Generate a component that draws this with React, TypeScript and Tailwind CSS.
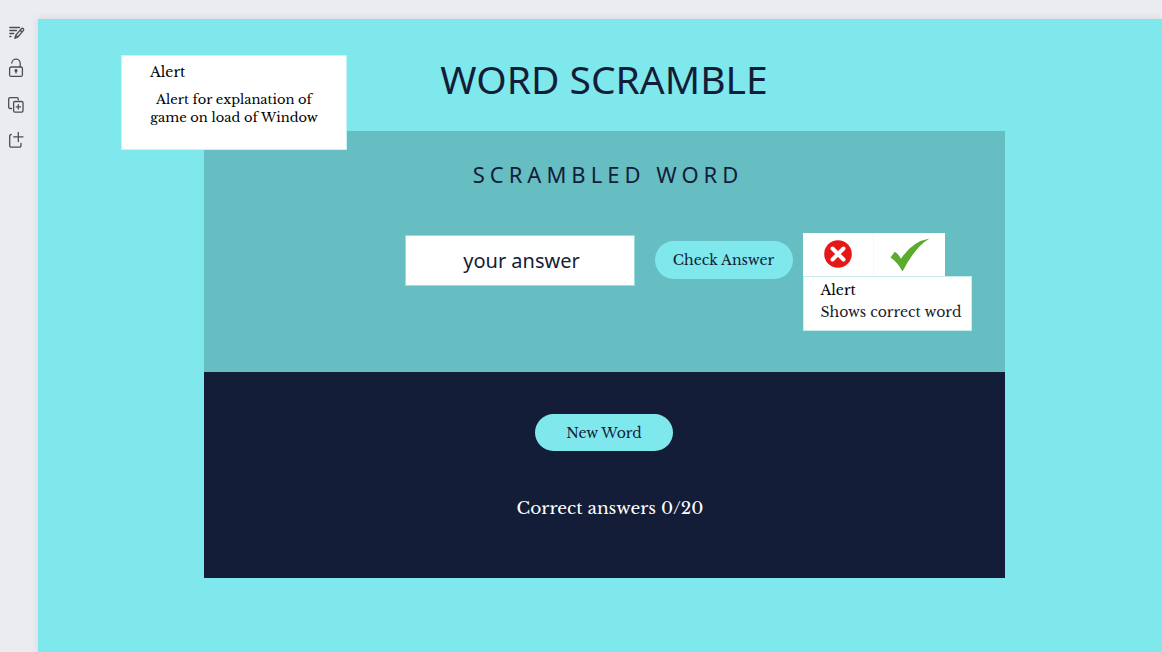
import type { ReactNode } from "react";

const serif = "font-['Libre_Baskerville','Liberation_Serif',serif]";
const sans = "font-['Noto_Sans',sans-serif]";

function RailButton({ label, children }: { label: string; children: ReactNode }) {
  return (
    <button type="button" aria-label={label} className="flex size-4 items-center justify-center text-[#4b4d52]">
      <svg viewBox="0 0 16 16" className="size-4 overflow-visible" fill="none" stroke="currentColor" strokeWidth="1.3" strokeLinecap="round" strokeLinejoin="round">
        {children}
      </svg>
    </button>
  );
}

function Rail() {
  return (
    <nav aria-label="Page tools" className="flex w-[38px] shrink-0 flex-col gap-5 pt-[25px] pl-2">
      <RailButton label="Notes">
        <path d="M1.8 2.500h9.700M1.800 5.500h6.700M1.800 8.500h4M1.800 11.500h1.200" />
        <path d="M6.800 13.300l1-3.200L13.400 3.800a1.300 1.300 0 0 1 1.900 1.800L9.800 12zM12.200 5.200l1.900 1.700M7.800 10.100l2 1.900" />
      </RailButton>
      <RailButton label="Lock">
        <rect x="1.600" y="6" width="12.800" height="9.400" rx="1.500" />
        <path d="M3.800 2A4.200 4.200 0 0 1 12.200 2.800V6" />
        <circle cx="8" cy="9.500" r=".9" fill="currentColor" />
        <path d="M8 9.800v2.200" />
      </RailButton>
      <RailButton label="Duplicate page">
        <path d="M3.500 11.500H2A1.300 1.300 0 0 1 .7 10.200V2A1.300 1.300 0 0 1 2 .7h7a1.300 1.300 0 0 1 1.300 1.300v.8" />
        <rect x="5.600" y="4.500" width="9.400" height="10.600" rx="1.300" />
        <path d="M10.300 7.600v4.400M8.100 9.800h4.400" />
      </RailButton>
      <RailButton label="Add page">
        <path d="M3.200 1.500a1.500 1.500 0 0 0-1.500 1.500v9.700a1.500 1.500 0 0 0 1.500 1.500h8.300a1.500 1.500 0 0 0 1.500-1.500v-2.200M10.300-.5v9M5.700 3.800h9.300" />
      </RailButton>
    </nav>
  );
}

function CrossIcon() {
  return (
    <svg viewBox="0 0 28 28" className="size-7" role="img" aria-label="Wrong">
      <circle cx="14" cy="14" r="13.800" fill="#e61717" />
      <path d="M8.500 8.500l11 11M19.500 8.500l-11 11" stroke="white" strokeWidth="4" strokeLinecap="round" />
    </svg>
  );
}

function CheckIcon() {
  return (
    <svg viewBox="0 0 40 34" className="h-[34px] w-10" role="img" aria-label="Correct">
      <path d="M.5 19.500L4.800 13.700Q8.500 16 11 20.800Q22 3.500 39.500.5Q25 9 12.500 33.500Q7.500 24 .5 19.500Z" fill="#5aab2e" />
    </svg>
  );
}

export default function App() {
  return (
    <div className={`flex min-h-screen bg-[#ebecf0] ${serif}`}>
      <Rail />
      <div className="flex grow pt-[19px]">
        <main className="relative grow bg-[#7ee8ed] pb-[74px] pl-2 shadow-[0_0_8px_rgba(60,70,90,0.12)]">
          <h1 className={`pt-8 text-center text-[39px] leading-[56px] text-[#141d38] ${sans}`}>WORD SCRAMBLE</h1>

          <div className="mx-auto mt-6 w-[801px] max-w-full">
            <section className="h-[241px] bg-[#66bdc2] pt-7">
              <h2 className={`pl-2 text-center text-[22px] leading-[30px] tracking-[5px] text-[#141d38] ${sans}`}>SCRAMBLED WORD</h2>
              <div className="mt-11 flex items-start pl-[201px]">
                <input
                  type="text"
                  aria-label="Your answer"
                  placeholder="your answer"
                  className={`mt-[2px] h-[51px] w-[230px] border border-[#9adbe0] bg-white pl-1 text-center text-xl text-[#141d38] outline-none placeholder:text-[#141d38] ${sans}`}
                />
                <button type="button" className="mt-2 ml-5 h-[38px] w-[138px] rounded-full bg-[#7ee8ed] text-sm text-[#141d38]">
                  Check Answer
                </button>
                <div className="ml-[10px]">
                  <div className="flex h-[43px] w-[142px] bg-white">
                    <div className="flex w-[71px] items-center justify-center border-r border-[#f4fafa] pb-[2px]">
                      <CrossIcon />
                    </div>
                    <div className="flex w-[71px] items-center justify-center pl-[2px]">
                      <CheckIcon />
                    </div>
                  </div>
                  <div className="h-[55px] w-[169px] border border-[#c9ecee] bg-white pt-[2px] pl-[17px] text-sm leading-[22px] whitespace-nowrap">
                    <p className="text-black">Alert</p>
                    <p className="text-[#1b1b2b]">Shows correct word</p>
                  </div>
                </div>
              </div>
            </section>

            <section className="flex h-[206px] flex-col items-center bg-[#141d38] pt-[42px]">
              <button type="button" className="h-[37px] w-[138px] rounded-full bg-[#7ee8ed] text-sm text-[#141d38]">
                New Word
              </button>
              <p className="mt-11 pl-3 text-[17px] leading-7 text-white">Correct answers 0/20</p>
            </section>
          </div>

          <aside className="absolute top-9 left-[83px] h-[95px] w-[226px] border border-[#c9f3f6] bg-white pt-[7px] text-[13px] leading-[18px] text-black">
            <p className="pl-7 text-sm leading-[18px]">Alert</p>
            <p className="mt-[10px] text-center">
              Alert for explanation of
              <br />
              game on load of Window
            </p>
          </aside>
        </main>
      </div>
    </div>
  );
}
